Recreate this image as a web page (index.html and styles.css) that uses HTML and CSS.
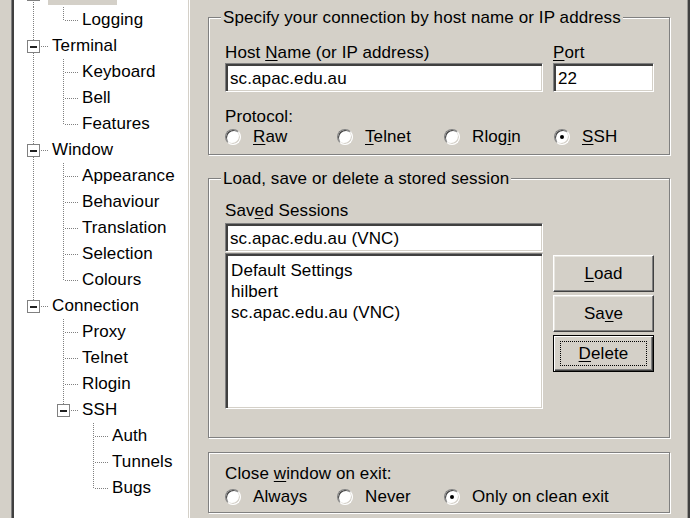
FILE: index.html
```html
<!DOCTYPE html>
<html>
<head>
<meta charset="utf-8">
<link rel="stylesheet" href="styles.css">
</head>
<body>
<div class="window">
  <div class="side">
    <div class="tree">
      <div class="row"><span class="c bx-d"><span class="box"><span class="minus"></span></span></span><span class="lbl sel">Session</span></div>
      <div class="row"><span class="c i"></span><span class="c l"></span><span class="lbl">Logging</span></div>
      <div class="row"><span class="c bx-ud"><span class="box"><span class="minus"></span></span></span><span class="lbl">Terminal</span></div>
      <div class="row"><span class="c i"></span><span class="c t"></span><span class="lbl">Keyboard</span></div>
      <div class="row"><span class="c i"></span><span class="c t"></span><span class="lbl">Bell</span></div>
      <div class="row"><span class="c i"></span><span class="c l"></span><span class="lbl">Features</span></div>
      <div class="row"><span class="c bx-ud"><span class="box"><span class="minus"></span></span></span><span class="lbl">Window</span></div>
      <div class="row"><span class="c i"></span><span class="c t"></span><span class="lbl">Appearance</span></div>
      <div class="row"><span class="c i"></span><span class="c t"></span><span class="lbl">Behaviour</span></div>
      <div class="row"><span class="c i"></span><span class="c t"></span><span class="lbl">Translation</span></div>
      <div class="row"><span class="c i"></span><span class="c t"></span><span class="lbl">Selection</span></div>
      <div class="row"><span class="c i"></span><span class="c l"></span><span class="lbl">Colours</span></div>
      <div class="row"><span class="c bx-u"><span class="box"><span class="minus"></span></span></span><span class="lbl">Connection</span></div>
      <div class="row"><span class="c"></span><span class="c t"></span><span class="lbl">Proxy</span></div>
      <div class="row"><span class="c"></span><span class="c t"></span><span class="lbl">Telnet</span></div>
      <div class="row"><span class="c"></span><span class="c t"></span><span class="lbl">Rlogin</span></div>
      <div class="row"><span class="c"></span><span class="c bx-u"><span class="box"><span class="minus"></span></span></span><span class="lbl">SSH</span></div>
      <div class="row"><span class="c"></span><span class="c"></span><span class="c t"></span><span class="lbl">Auth</span></div>
      <div class="row"><span class="c"></span><span class="c"></span><span class="c t"></span><span class="lbl">Tunnels</span></div>
      <div class="row"><span class="c"></span><span class="c"></span><span class="c l"></span><span class="lbl">Bugs</span></div>
    </div>
  </div>

  <div class="panel">
    <div class="group g1">
      <div class="title">Specify your connection by host name or IP address</div>
      <div class="cols labels">
        <div>Host <u>N</u>ame (or IP address)</div>
        <div><u>P</u>ort</div>
      </div>
      <div class="cols">
        <div class="field">sc.apac.edu.au</div>
        <div class="field">22</div>
      </div>
      <div class="plabel">Protocol:</div>
      <div class="radios">
        <div class="radio"><span class="rb"></span><span><u>R</u>aw</span></div>
        <div class="radio"><span class="rb"></span><span><u>T</u>elnet</span></div>
        <div class="radio"><span class="rb"></span><span>Rlog<u>i</u>n</span></div>
        <div class="radio"><span class="rb on"></span><span><u>S</u>SH</span></div>
      </div>
    </div>

    <div class="group g2">
      <div class="title">Load, save or delete a stored session</div>
      <div class="slabel">Sav<u>e</u>d Sessions</div>
      <div class="cols">
        <div class="field">sc.apac.edu.au (VNC)</div>
      </div>
      <div class="cols lrow">
        <div class="list">
          <div>Default Settings</div>
          <div>hilbert</div>
          <div>sc.apac.edu.au (VNC)</div>
        </div>
        <div class="buttons">
          <div class="btn"><span><u>L</u>oad</span></div>
          <div class="btn"><span>Sa<u>v</u>e</span></div>
          <div class="btn def"><span class="focus"><span><u>D</u>elete</span></span></div>
        </div>
      </div>
    </div>

    <div class="group g3">
      <div>Close <u>w</u>indow on exit:</div>
      <div class="radios">
        <div class="radio"><span class="rb"></span><span>Always</span></div>
        <div class="radio"><span class="rb"></span><span>Never</span></div>
        <div class="radio"><span class="rb on"></span><span>Only on clean exit</span></div>
      </div>
    </div>
  </div>
  <div class="edge"></div>
</div>
</body>
</html>
```
FILE: styles.css
```css
* { box-sizing: border-box; }
html, body { margin: 0; padding: 0; }
body {
  width: 690px;
  height: 518px;
  overflow: hidden;
  background: #d4d0c8;
  font-family: "Liberation Sans", Arial, sans-serif;
  font-size: 17px;
  line-height: 20px;
  color: #000;
  letter-spacing: 0.1px;
}
u { text-decoration-thickness: 1px; text-underline-offset: 2px; }

.window { display: flex; height: 518px; }

/* tree */
.side { width: 190px; flex: none; padding-left: 11px; }
.tree {
  margin-top: -22px;
  height: 560px;
  background: #fff;
  border: 1px solid;
  border-color: #808080 #fff #fff #808080;
  box-shadow: inset 2px 2px 0 #404040, inset -1px -1px 0 #d4d0c8;
  padding: 2px 0 0 6px;
}
.row { display: flex; height: 26px; }
.c { width: 30px; flex: none; background-repeat: no-repeat; display: flex; align-items: flex-start; }
.lbl { height: 22px; line-height: 22px; margin-top: 2px; padding: 0 4px; white-space: nowrap; }
.sel { background: #d4d0c8; }

.i {
  background-image: repeating-linear-gradient(to bottom, #808080 0 1px, transparent 1px 2px);
  background-position: 15px 0;
  background-size: 1px 100%;
}
.t {
  background-image: repeating-linear-gradient(to bottom, #808080 0 1px, transparent 1px 2px),
                    repeating-linear-gradient(to right, #808080 0 1px, transparent 1px 2px);
  background-position: 15px 0, 17px 13px;
  background-size: 1px 100%, 13px 1px;
}
.l {
  background-image: repeating-linear-gradient(to bottom, #808080 0 1px, transparent 1px 2px),
                    repeating-linear-gradient(to right, #808080 0 1px, transparent 1px 2px);
  background-position: 15px 0, 17px 13px;
  background-size: 1px 14px, 13px 1px;
}
.bx-ud, .bx-u, .bx-d {
  background-image: repeating-linear-gradient(to bottom, #808080 0 1px, transparent 1px 2px),
                    repeating-linear-gradient(to right, #808080 0 1px, transparent 1px 2px);
}
.bx-ud { background-position: 15px 0, 23px 13px; background-size: 1px 100%, 7px 1px; }
.bx-u { background-position: 15px 0, 23px 13px; background-size: 1px 8px, 7px 1px; }
.bx-d { background-position: 15px 19px, 23px 13px; background-size: 1px 8px, 7px 1px; }
.box {
  width: 13px;
  height: 13px;
  margin: 7px 0 0 9px;
  border: 1px solid #808080;
  background: #fff;
  display: flex;
  align-items: center;
  justify-content: center;
}
.minus { width: 7px; height: 2px; background: #222; }

/* panel */
.panel {
  flex: 1;
  padding: 17px 17px 0 18px;
  display: flex;
  flex-direction: column;
}
.edge {
  width: 3px;
  flex: none;
  background: linear-gradient(to right, #9a9893 0 1px, #404040 1px 3px);
}
.group {
  border: 1px solid #808080;
  box-shadow: inset 1px 1px 0 #fff, 1px 1px 0 #fff;
  padding: 0 15px 0 16px;
}
.title {
  display: table;
  margin: -10px 0 0 -4px;
  padding: 0 2px;
  background: #d4d0c8;
  white-space: nowrap;
}
.cols { display: grid; grid-template-columns: 318px 101px; column-gap: 10px; }
.g1 { padding-bottom: 7px; }
.labels { margin-top: 15px; }
.plabel { margin-top: 15px; }

.g2 { margin-top: 23px; padding-bottom: 28px; }
.slabel { margin-top: 12px; margin-bottom: 2px; }
.lrow { margin-top: 1px; }

.g3 { margin-top: 14px; padding-top: 11px; padding-bottom: 5px; }
.g3 .radios { margin-top: 3px; }

.field {
  height: 29px;
  background: #fff;
  border: 1px solid;
  border-color: #808080 #fff #fff #808080;
  box-shadow: inset 2px 2px 0 #404040, inset -1px -1px 0 #d4d0c8;
  padding: 3px 3px 0 4px;
  line-height: 24px;
  white-space: nowrap;
  overflow: hidden;
}
.list {
  height: 156px;
  background: #fff;
  border: 1px solid;
  border-color: #808080 #fff #fff #808080;
  box-shadow: inset 2px 2px 0 #404040, inset -1px -1px 0 #d4d0c8;
  padding: 6px 4px 0 5px;
  line-height: 21px;
  white-space: nowrap;
}

.radios { display: grid; grid-template-columns: 112px 107px 110px auto; height: 20px; }
.radio { display: flex; align-items: center; gap: 12px; white-space: nowrap; }
.rb {
  width: 16px;
  height: 16px;
  flex: none;
  border-radius: 50%;
  background: #fff;
  border: 1px solid;
  border-color: #808080 #fff #fff #808080;
  box-shadow: inset 1px 1px 0 #404040, inset -1px -1px 0 #d4d0c8;
  display: flex;
  align-items: center;
  justify-content: center;
}
.rb.on::after { content: ""; width: 4px; height: 4px; border-radius: 50%; background: #000; }

.buttons { display: flex; flex-direction: column; gap: 3px; padding-top: 2px; }
.btn {
  height: 37px;
  background: #d4d0c8;
  border: 1px solid;
  border-color: #fff #404040 #404040 #fff;
  box-shadow: inset -1px -1px 0 #808080, inset 1px 1px 0 #e8e6e0;
  display: flex;
  align-items: center;
  justify-content: center;
}
.btn.def {
  border-color: #000;
  box-shadow: inset 1px 1px 0 #fff, inset -1px -1px 0 #404040, inset -2px -2px 0 #808080;
  padding: 5px 6px;
  align-items: stretch;
}
.focus {
  flex: 1;
  border: 1px dotted #000;
  display: flex;
  align-items: center;
  justify-content: center;
}
```
